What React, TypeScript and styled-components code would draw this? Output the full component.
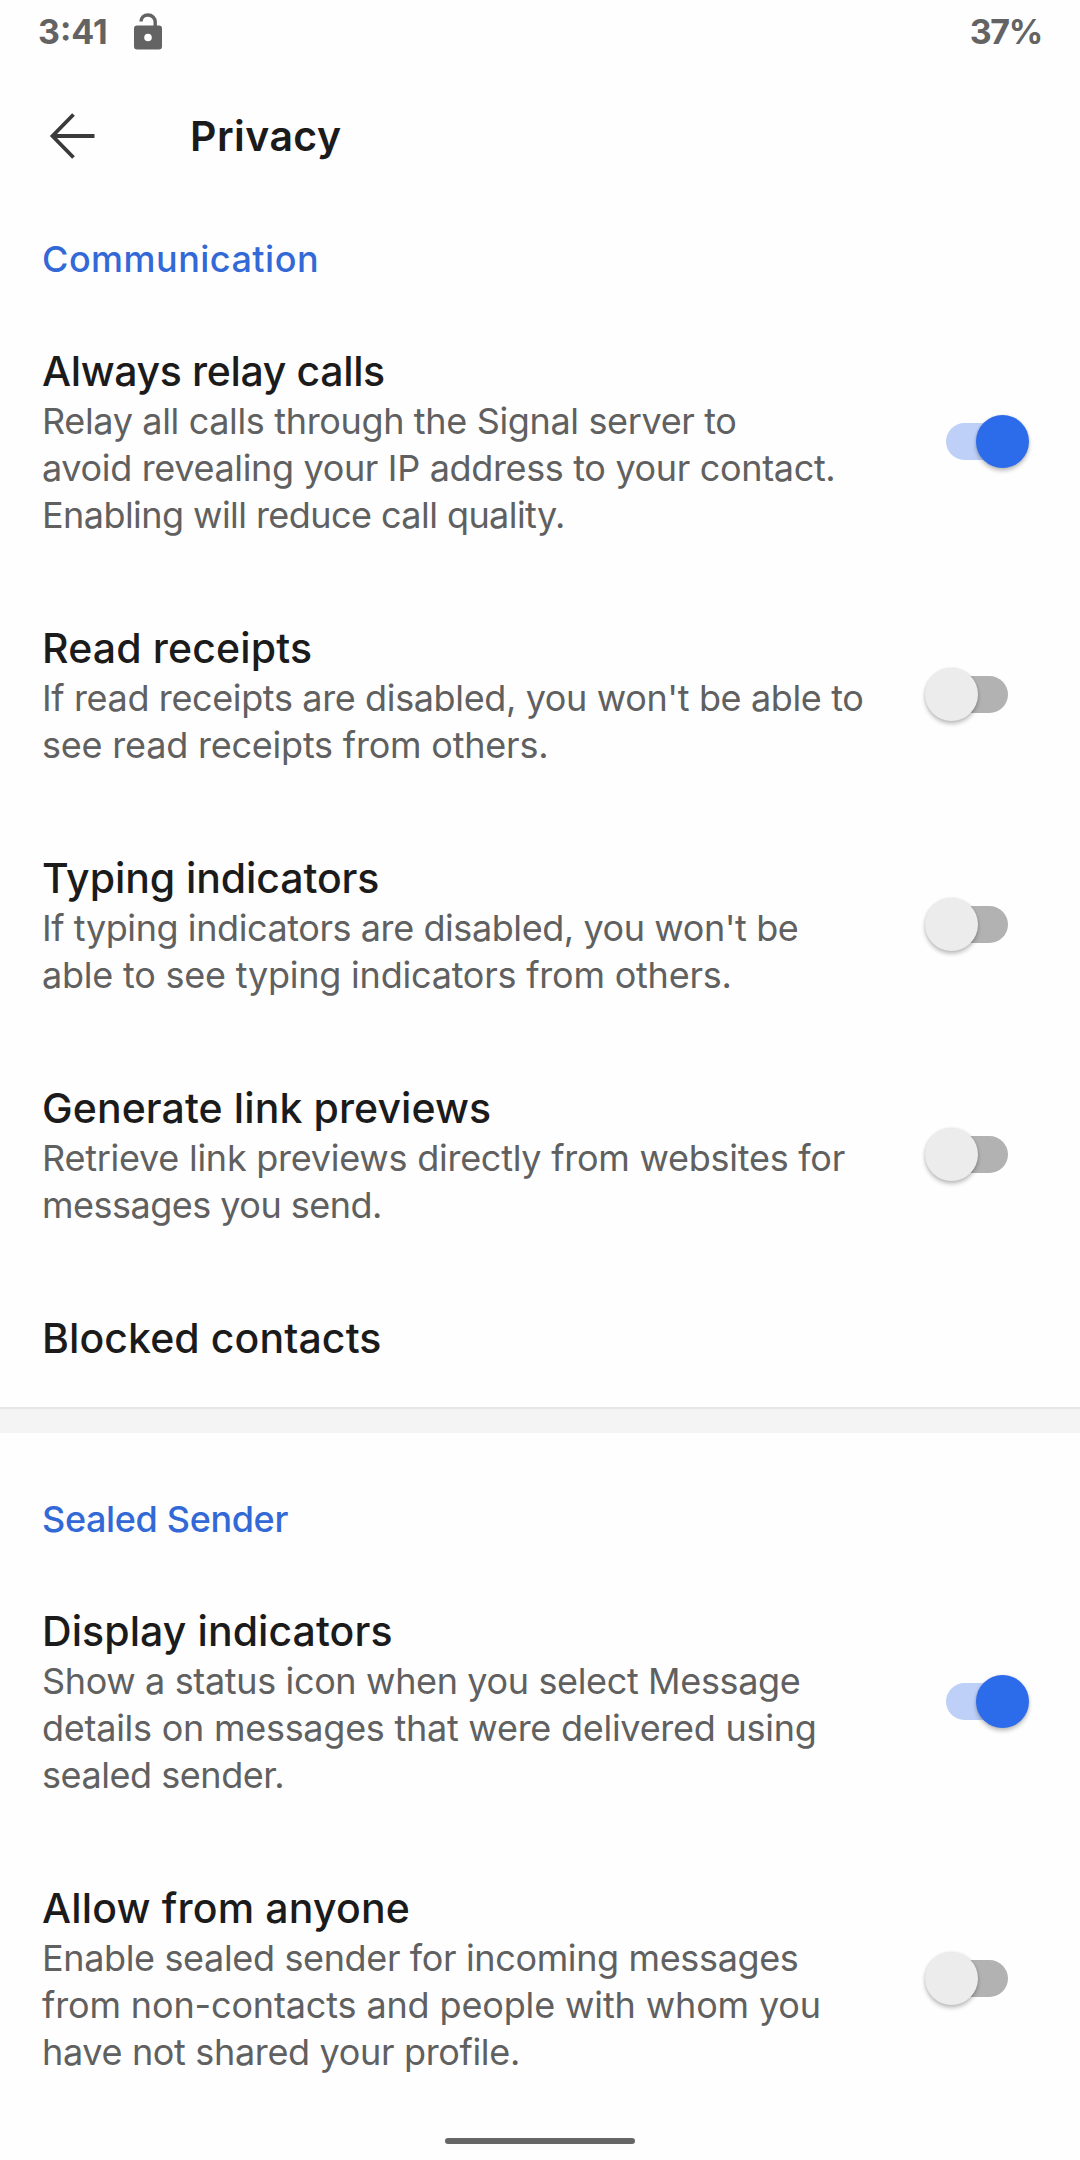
import React from 'react';
import styled, { createGlobalStyle } from 'styled-components';

const GlobalStyle = createGlobalStyle`
  *, *::before, *::after { box-sizing: border-box; }
  body {
    margin: 0;
    background: #fefefe;
    font-family: Inter, Roboto, sans-serif;
  }
`;

const Screen = styled.div`
  display: flex;
  flex-direction: column;
  width: 1080px;
  height: 2160px;
  overflow: hidden;
  background: #fefefe;
`;

const StatusBar = styled.header`
  display: flex;
  align-items: center;
  height: 63px;
  padding: 0 38px;
  color: #636363;
  font-size: 34px;
  font-weight: 700;
  line-height: 42px;
`;

const Clock = styled.span`
  width: 96px;
`;

const LockIcon = styled.svg`
  width: 28px;
  height: 37px;
`;

const Battery = styled.span`
  margin-left: auto;
  letter-spacing: -1.3px;
`;

const AppBar = styled.div`
  display: flex;
  align-items: center;
  height: 110px;
  padding: 36px 42px 0 49px;
`;

const BackButton = styled.button`
  display: flex;
  width: 141px;
  padding: 0;
  border: 0;
  background: none;
`;

const PageTitle = styled.h1`
  margin: 0;
  color: #1b1b1b;
  font-size: 41px;
  font-weight: 600;
  line-height: 50px;
  letter-spacing: 0.45px;
`;

const SectionTitle = styled.h2<{ $tracking: number }>`
  margin: 0;
  padding: 64px 42px 23px;
  color: #3369d6;
  font-size: 36px;
  font-weight: 500;
  line-height: 44px;
  letter-spacing: ${(p) => p.$tracking}px;
`;

const PreferenceRow = styled.div`
  display: flex;
  align-items: center;
  justify-content: space-between;
  padding: 41px 51px 42px 42px;
`;

const PreferenceTitle = styled.div<{ $tracking: number }>`
  color: #1b1b1b;
  font-size: 41px;
  font-weight: 500;
  line-height: 53px;
  letter-spacing: ${(p) => p.$tracking}px;
  white-space: nowrap;
`;

const SummaryLine = styled.div<{ $tracking: number }>`
  color: #606060;
  font-size: 36px;
  line-height: 47px;
  letter-spacing: ${(p) => p.$tracking}px;
  white-space: nowrap;
`;

const Switch = styled.div<{ $on: boolean }>`
  position: relative;
  display: flex;
  flex: none;
  align-items: center;
  justify-content: ${(p) => (p.$on ? 'flex-end' : 'flex-start')};
  width: 104px;
  height: 53px;
  margin-bottom: 2px;

  &::before {
    content: '';
    position: absolute;
    left: 21px;
    top: 8px;
    width: 62px;
    height: 37px;
    border-radius: 19px;
    background: ${(p) => (p.$on ? '#bed0f8' : '#b2b2b2')};
  }
`;

const Thumb = styled.span<{ $on: boolean }>`
  position: relative;
  width: 53px;
  height: 53px;
  border-radius: 50%;
  background: ${(p) => (p.$on ? '#2c6bea' : '#ececec')};
  box-shadow: 0 3px 4px rgba(0, 0, 0, 0.24), 0 0 3px rgba(0, 0, 0, 0.1);
`;

const Divider = styled.div`
  height: 26px;
  border-top: 2px solid #e6e6e6;
  background: #f4f4f4;
`;

const NavigationBar = styled.footer`
  display: flex;
  justify-content: center;
  padding-top: 20px;
`;

const HomeHandle = styled.div`
  width: 190px;
  height: 6px;
  border-radius: 3px;
  background: #666;
`;

type Line = [text: string, tracking: number];

interface Preference {
  title: Line;
  summary?: Line[];
  on?: boolean;
}

interface Section {
  heading: Line;
  preferences: Preference[];
}

const sections: Section[] = [
  {
    heading: ['Communication', 0.48],
    preferences: [
      {
        title: ['Always relay calls', -0.36],
        summary: [
          ['Relay all calls through the Signal server to', -0.35],
          ['avoid revealing your IP address to your contact.', -0.34],
          ['Enabling will reduce call quality.', -0.56],
        ],
        on: true,
      },
      {
        title: ['Read receipts', 0.15],
        summary: [
          ["If read receipts are disabled, you won't be able to", -0.37],
          ['see read receipts from others.', -0.21],
        ],
        on: false,
      },
      {
        title: ['Typing indicators', -0.08],
        summary: [
          ["If typing indicators are disabled, you won't be", -0.42],
          ['able to see typing indicators from others.', -0.22],
        ],
        on: false,
      },
      {
        title: ['Generate link previews', 0.09],
        summary: [
          ['Retrieve link previews directly from websites for', -0.25],
          ['messages you send.', -0.51],
        ],
        on: false,
      },
      { title: ['Blocked contacts', 0.1] },
    ],
  },
  {
    heading: ['Sealed Sender', -0.36],
    preferences: [
      {
        title: ['Display indicators', 0.08],
        summary: [
          ['Show a status icon when you select Message', -0.36],
          ['details on messages that were delivered using', -0.26],
          ['sealed sender.', -0.45],
        ],
        on: true,
      },
      {
        title: ['Allow from anyone', 0.17],
        summary: [
          ['Enable sealed sender for incoming messages', -0.36],
          ['from non-contacts and people with whom you', -0.14],
          ['have not shared your profile.', -0.34],
        ],
        on: false,
      },
    ],
  },
];

function PreferenceItem({ title, summary = [], on }: Preference) {
  return (
    <PreferenceRow>
      <div>
        <PreferenceTitle $tracking={title[1]}>{title[0]}</PreferenceTitle>
        {summary.map(([text, tracking]) => (
          <SummaryLine key={text} $tracking={tracking}>
            {text}
          </SummaryLine>
        ))}
      </div>
      {on !== undefined && (
        <Switch $on={on} role="switch" aria-checked={on}>
          <Thumb $on={on} />
        </Switch>
      )}
    </PreferenceRow>
  );
}

export default function App() {
  return (
    <>
      <GlobalStyle />
      <Screen>
        <StatusBar>
          <Clock>3:41</Clock>
          <LockIcon viewBox="0 0 28 37">
            <path d="M7 8.5C7 4.5 10 2 14 2s7.2 3 7.2 7v5" fill="none" stroke="#636363" strokeWidth="3.4" />
            <path
              fillRule="evenodd"
              d="M3 12.5h22a3 3 0 0 1 3 3V33.5a3 3 0 0 1-3 3H3a3 3 0 0 1-3-3V15.5a3 3 0 0 1 3-3ZM14 20.7a3.8 3.8 0 1 0 0 7.6a3.8 3.8 0 0 0 0-7.6Z"
              fill="#636363"
            />
          </LockIcon>
          <Battery>37%</Battery>
        </StatusBar>
        <AppBar>
          <BackButton aria-label="Back">
            <svg width="46" height="46" viewBox="0 0 46 46" fill="none" stroke="#3a3a3a" strokeWidth="3.8">
              <path d="M24.5 1.5 3.5 23 24.5 44.5M3.5 23H45.5" />
            </svg>
          </BackButton>
          <PageTitle>Privacy</PageTitle>
        </AppBar>
        {sections.map((section, i) => (
          <React.Fragment key={section.heading[0]}>
            {i > 0 && <Divider />}
            <section>
              <SectionTitle $tracking={section.heading[1]}>{section.heading[0]}</SectionTitle>
              {section.preferences.map((preference) => (
                <PreferenceItem key={preference.title[0]} {...preference} />
              ))}
            </section>
          </React.Fragment>
        ))}
        <NavigationBar>
          <HomeHandle />
        </NavigationBar>
      </Screen>
    </>
  );
}
